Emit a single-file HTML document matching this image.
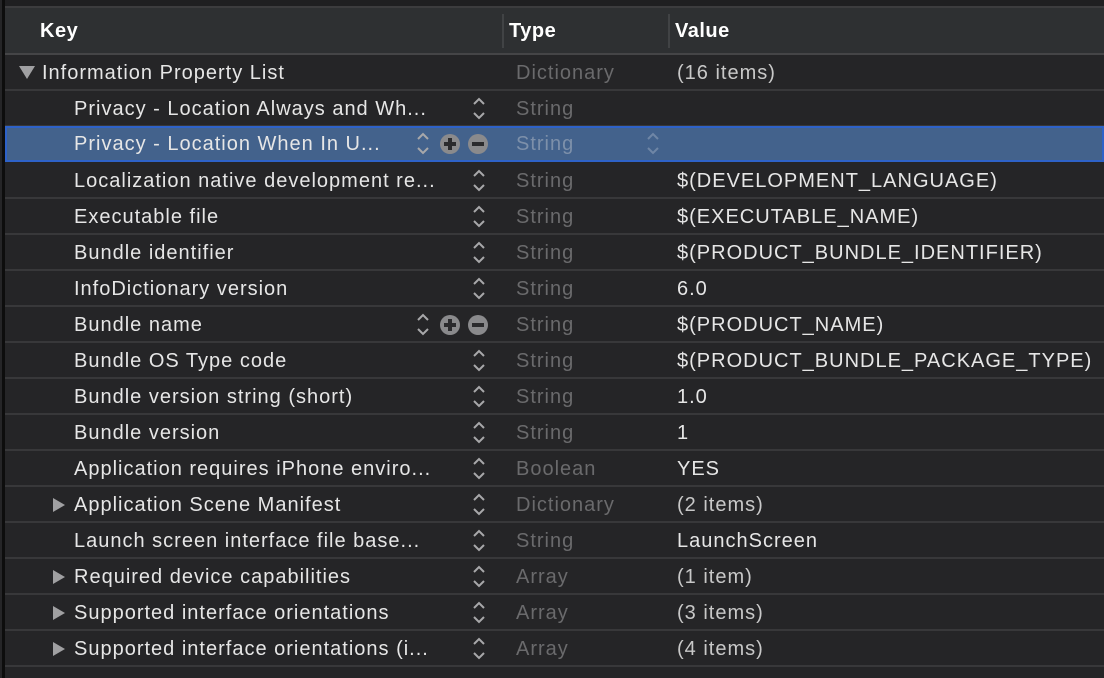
<!DOCTYPE html><html><head><style>
body{margin:0;width:1104px;height:678px;background:#252527;overflow:hidden;font-family:"Liberation Sans",sans-serif;font-size:20px;letter-spacing:1px;position:relative}
.lb{position:absolute;left:2px;top:0;width:3px;height:678px;background:#0d0d0d}
.top{position:absolute;left:5px;top:0;width:1099px;height:6px;background:#1f1f21;border-bottom:2px solid #3c3c3e}
.hdr{position:absolute;left:5px;top:8px;width:1099px;height:45px;background:#2e3032;border-bottom:2px solid #454547;color:#fff;font-weight:bold;letter-spacing:0.5px}
.hdr span{position:absolute;top:12px}
.vs{position:absolute;top:6px;width:2px;height:34px;background:#414345}
.row{position:absolute;left:5px;width:1099px;height:34px;border-bottom:2px solid #38383a;color:#e6e6e6}
.row span{position:absolute;top:7px;white-space:nowrap}
.k{left:69px}.t{left:511px;color:#6a6a6c}.v{left:672px}
.st{position:absolute;left:464px;top:5px}
.sel{background:#43628c;border:2px solid #2e62c8;height:32px;top:126px!important;left:5px;width:1095px}
.tri{position:absolute;left:48px;top:11px;width:0;height:0;border-left:12px solid #a0a0a2;border-top:7px solid transparent;border-bottom:7px solid transparent}
.pm{position:absolute;top:8px;width:20px;height:20px;border-radius:50%;background:#8a8a8c}
.pm:before{content:"";position:absolute;left:4px;top:8px;width:12px;height:4px;background:#2b2b2d}
.pl:after{content:"";position:absolute;left:8px;top:4px;width:4px;height:12px;background:#2b2b2d}
</style></head><body>
<div class="lb"></div><div class="top"></div>
<div class="hdr"><span style="left:35px">Key</span><div class="vs" style="left:497px"></div><span style="left:504px">Type</span><div class="vs" style="left:663px"></div><span style="left:670px">Value</span></div>
<svg width="0" height="0" style="position:absolute"><defs><g id="s"><path d="M5 8 L10 3 L15 8 M5 17 L10 22 L15 17" fill="none" stroke="#a8a8aa" stroke-width="2"/></g></defs></svg>

<div class="row" style="top:55px"><div style="position:absolute;left:14px;top:11px;border-top:13px solid #a0a0a2;border-left:8px solid transparent;border-right:8px solid transparent"></div><span style="left:37px">Information Property List</span><span class="t">Dictionary</span><span class="v" style="color:#c8c8c8">(16 items)</span></div>
<div class="row" style="top:91px"><span class="k">Privacy - Location Always and Wh...</span><svg class="st" width="20" height="26"><use href="#s"/></svg><span class="t">String</span></div>
<div class="row sel"><span class="k" style="left:67px;top:5px">Privacy - Location When In U...</span><svg class="st" style="left:406px;top:3px" width="20" height="26"><use href="#s"/></svg><div class="pm pl" style="left:433px;top:6px"></div><div class="pm" style="left:461px;top:6px"></div><span class="t" style="left:509px;top:5px;color:#7d90aa">String</span><svg class="st" style="left:636px;top:3px" width="20" height="26"><path d="M5 8 L10 3 L15 8 M5 17 L10 22 L15 17" fill="none" stroke="#6f86a6" stroke-width="2"/></svg></div>
<div class="row" style="top:163px"><span class="k">Localization native development re...</span><svg class="st" width="20" height="26"><use href="#s"/></svg><span class="t">String</span><span class="v">$(DEVELOPMENT_LANGUAGE)</span></div>
<div class="row" style="top:199px"><span class="k">Executable file</span><svg class="st" width="20" height="26"><use href="#s"/></svg><span class="t">String</span><span class="v">$(EXECUTABLE_NAME)</span></div>
<div class="row" style="top:235px"><span class="k">Bundle identifier</span><svg class="st" width="20" height="26"><use href="#s"/></svg><span class="t">String</span><span class="v">$(PRODUCT_BUNDLE_IDENTIFIER)</span></div>
<div class="row" style="top:271px"><span class="k">InfoDictionary version</span><svg class="st" width="20" height="26"><use href="#s"/></svg><span class="t">String</span><span class="v">6.0</span></div>
<div class="row" style="top:307px"><span class="k">Bundle name</span><svg class="st" style="left:408px" width="20" height="26"><use href="#s"/></svg><div class="pm pl" style="left:435px"></div><div class="pm" style="left:463px"></div><span class="t">String</span><span class="v">$(PRODUCT_NAME)</span></div>
<div class="row" style="top:343px"><span class="k">Bundle OS Type code</span><svg class="st" width="20" height="26"><use href="#s"/></svg><span class="t">String</span><span class="v">$(PRODUCT_BUNDLE_PACKAGE_TYPE)</span></div>
<div class="row" style="top:379px"><span class="k">Bundle version string (short)</span><svg class="st" width="20" height="26"><use href="#s"/></svg><span class="t">String</span><span class="v">1.0</span></div>
<div class="row" style="top:415px"><span class="k">Bundle version</span><svg class="st" width="20" height="26"><use href="#s"/></svg><span class="t">String</span><span class="v">1</span></div>
<div class="row" style="top:451px"><span class="k">Application requires iPhone enviro...</span><svg class="st" width="20" height="26"><use href="#s"/></svg><span class="t">Boolean</span><span class="v">YES</span></div>
<div class="row" style="top:487px"><div class="tri"></div><span class="k">Application Scene Manifest</span><svg class="st" width="20" height="26"><use href="#s"/></svg><span class="t">Dictionary</span><span class="v" style="color:#c8c8c8">(2 items)</span></div>
<div class="row" style="top:523px"><span class="k">Launch screen interface file base...</span><svg class="st" width="20" height="26"><use href="#s"/></svg><span class="t">String</span><span class="v">LaunchScreen</span></div>
<div class="row" style="top:559px"><div class="tri"></div><span class="k">Required device capabilities</span><svg class="st" width="20" height="26"><use href="#s"/></svg><span class="t">Array</span><span class="v" style="color:#c8c8c8">(1 item)</span></div>
<div class="row" style="top:595px"><div class="tri"></div><span class="k">Supported interface orientations</span><svg class="st" width="20" height="26"><use href="#s"/></svg><span class="t">Array</span><span class="v" style="color:#c8c8c8">(3 items)</span></div>
<div class="row" style="top:631px"><div class="tri"></div><span class="k">Supported interface orientations (i...</span><svg class="st" width="20" height="26"><use href="#s"/></svg><span class="t">Array</span><span class="v" style="color:#c8c8c8">(4 items)</span></div>
</body></html>
